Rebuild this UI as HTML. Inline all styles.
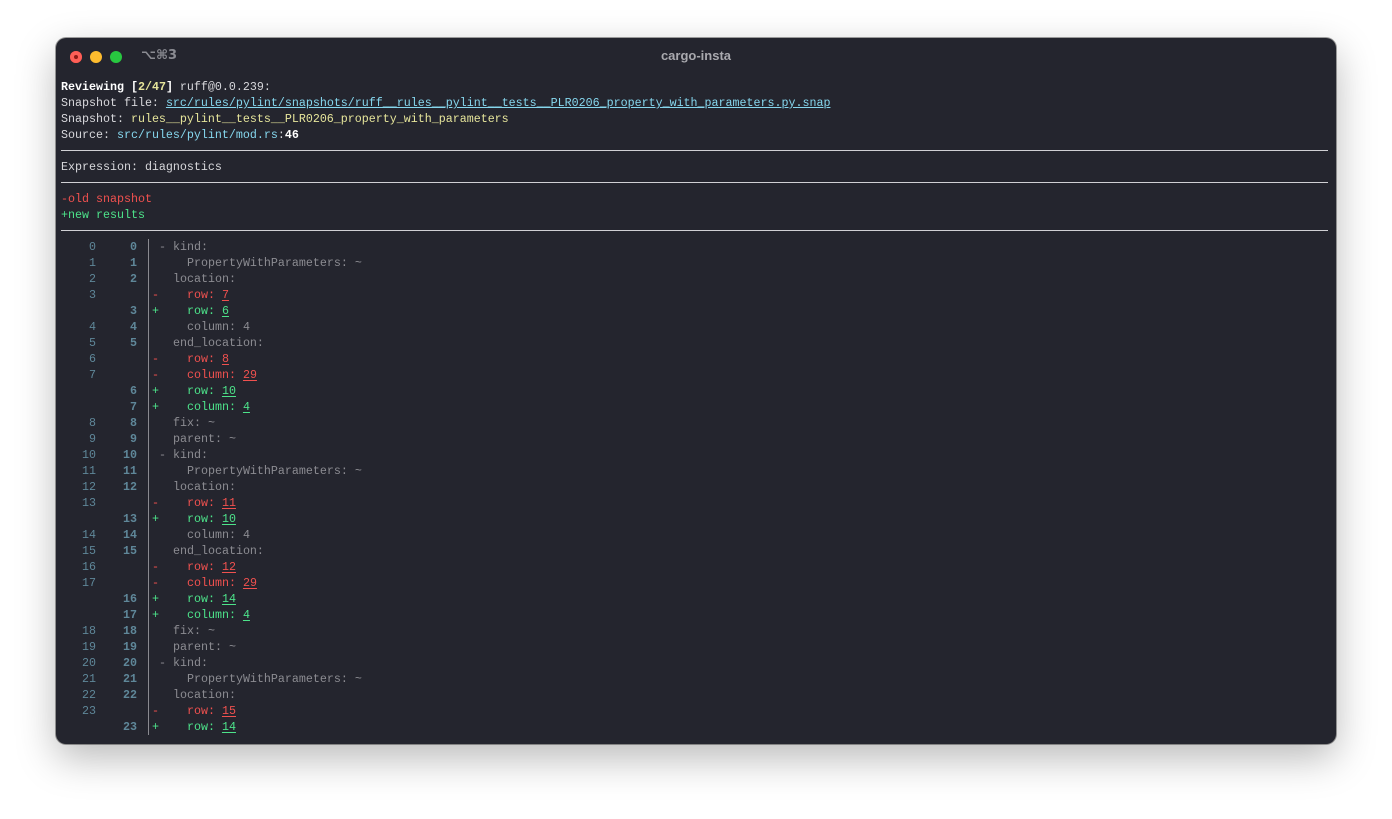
<!DOCTYPE html>
<html><head><meta charset="utf-8">
<style>
html,body{margin:0;padding:0;background:#fff;width:1392px;height:819px;overflow:hidden}
.win{position:absolute;left:56px;top:38px;width:1280px;height:706px;background:#24252e;border-radius:10px;box-shadow:0 14px 40px rgba(0,0,0,0.28),0 0 0 1px rgba(0,0,0,0.35)}
.dot{position:absolute;top:13px;width:12px;height:12px;border-radius:50%}
.title{position:absolute;top:10px;left:0;width:1280px;text-align:center;font:bold 13px "Liberation Sans",sans-serif;color:#a9a9ae}
.kb{position:absolute;left:85px;top:10px;font:bold 13px "DejaVu Sans",sans-serif;color:#8a8b92}
.l{position:absolute;height:16px;line-height:16px;font-family:"Liberation Mono",monospace;font-size:11.67px;color:#d8d8dc;white-space:pre}
.rule{position:absolute;left:61px;width:1267px;height:1px;background:#d0d0d4}
.b{font-weight:bold;color:#fff}
.y{color:#e6e59b}
.c{color:#86d7ee;text-decoration:underline}
.c2{color:#86d7ee}
.r{color:#f0514f}
.g{color:#4de38a}
.gr{color:#8c8c92}
.on{position:absolute;width:40px;text-align:right;left:56px;color:#5f8799}
.nn{position:absolute;width:40px;text-align:right;left:97px;color:#5f8799;font-weight:bold}
.mk{position:absolute;left:152px}
.ct{position:absolute;left:159px}
u{text-underline-offset:2px}
</style></head><body>
<div class="win">
<div class="dot" style="left:14px;background:#fe5f57;box-shadow:inset 0 0 0 4px #fe5f57,inset 0 0 0 6px #8f1a16"></div>
<div class="dot" style="left:34px;background:#febc2e"></div>
<div class="dot" style="left:54px;background:#28c840"></div>
<div class="kb">⌥⌘3</div>
<div class="title">cargo-insta</div>
</div>
<div class="l" style="left:61px;top:79px"><span class="b">Reviewing [</span><span class="b y">2/47</span><span class="b">]</span> ruff@0.0.239:</div>
<div class="l" style="left:61px;top:95px">Snapshot file: <span class="c">src/rules/pylint/snapshots/ruff__rules__pylint__tests__PLR0206_property_with_parameters.py.snap</span></div>
<div class="l" style="left:61px;top:111px">Snapshot: <span class="y">rules__pylint__tests__PLR0206_property_with_parameters</span></div>
<div class="l" style="left:61px;top:127px">Source: <span class="c2">src/rules/pylint/mod.rs</span>:<span class="b">46</span></div>
<div class="rule" style="top:150px"></div>
<div class="l" style="left:61px;top:159px">Expression: diagnostics</div>
<div class="rule" style="top:182px"></div>
<div class="l r" style="left:61px;top:191px">-old snapshot</div>
<div class="l g" style="left:61px;top:207px">+new results</div>
<div class="rule" style="top:230px"></div>
<div style="position:absolute;left:148px;top:239px;width:1px;height:496px;background:#8a8a90"></div>
<div id="d"></div>
<script>
var rows=[
["0","0"," ","<span class=gr>- kind:</span>"],
["1","1"," ","<span class=gr>    PropertyWithParameters: ~</span>"],
["2","2"," ","<span class=gr>  location:</span>"],
["3","","-","<span class=r>    row: <u>7</u></span>"],
["","3","+","<span class=g>    row: <u>6</u></span>"],
["4","4"," ","<span class=gr>    column: 4</span>"],
["5","5"," ","<span class=gr>  end_location:</span>"],
["6","","-","<span class=r>    row: <u>8</u></span>"],
["7","","-","<span class=r>    column: <u>29</u></span>"],
["","6","+","<span class=g>    row: <u>10</u></span>"],
["","7","+","<span class=g>    column: <u>4</u></span>"],
["8","8"," ","<span class=gr>  fix: ~</span>"],
["9","9"," ","<span class=gr>  parent: ~</span>"],
["10","10"," ","<span class=gr>- kind:</span>"],
["11","11"," ","<span class=gr>    PropertyWithParameters: ~</span>"],
["12","12"," ","<span class=gr>  location:</span>"],
["13","","-","<span class=r>    row: <u>11</u></span>"],
["","13","+","<span class=g>    row: <u>10</u></span>"],
["14","14"," ","<span class=gr>    column: 4</span>"],
["15","15"," ","<span class=gr>  end_location:</span>"],
["16","","-","<span class=r>    row: <u>12</u></span>"],
["17","","-","<span class=r>    column: <u>29</u></span>"],
["","16","+","<span class=g>    row: <u>14</u></span>"],
["","17","+","<span class=g>    column: <u>4</u></span>"],
["18","18"," ","<span class=gr>  fix: ~</span>"],
["19","19"," ","<span class=gr>  parent: ~</span>"],
["20","20"," ","<span class=gr>- kind:</span>"],
["21","21"," ","<span class=gr>    PropertyWithParameters: ~</span>"],
["22","22"," ","<span class=gr>  location:</span>"],
["23","","-","<span class=r>    row: <u>15</u></span>"],
["","23","+","<span class=g>    row: <u>14</u></span>"]];
var h="";
rows.forEach(function(r,i){var t=239+16*i;
h+='<div class="l on" style="top:'+t+'px">'+r[0]+'</div>';
h+='<div class="l nn" style="top:'+t+'px">'+r[1]+'</div>';
h+='<div class="l mk '+(r[2]=="-"?"r":"g")+'" style="top:'+t+'px">'+r[2]+'</div>';
h+='<div class="l ct" style="top:'+t+'px">'+r[3]+'</div>';});
document.getElementById("d").innerHTML=h;
</script>
</body></html>
